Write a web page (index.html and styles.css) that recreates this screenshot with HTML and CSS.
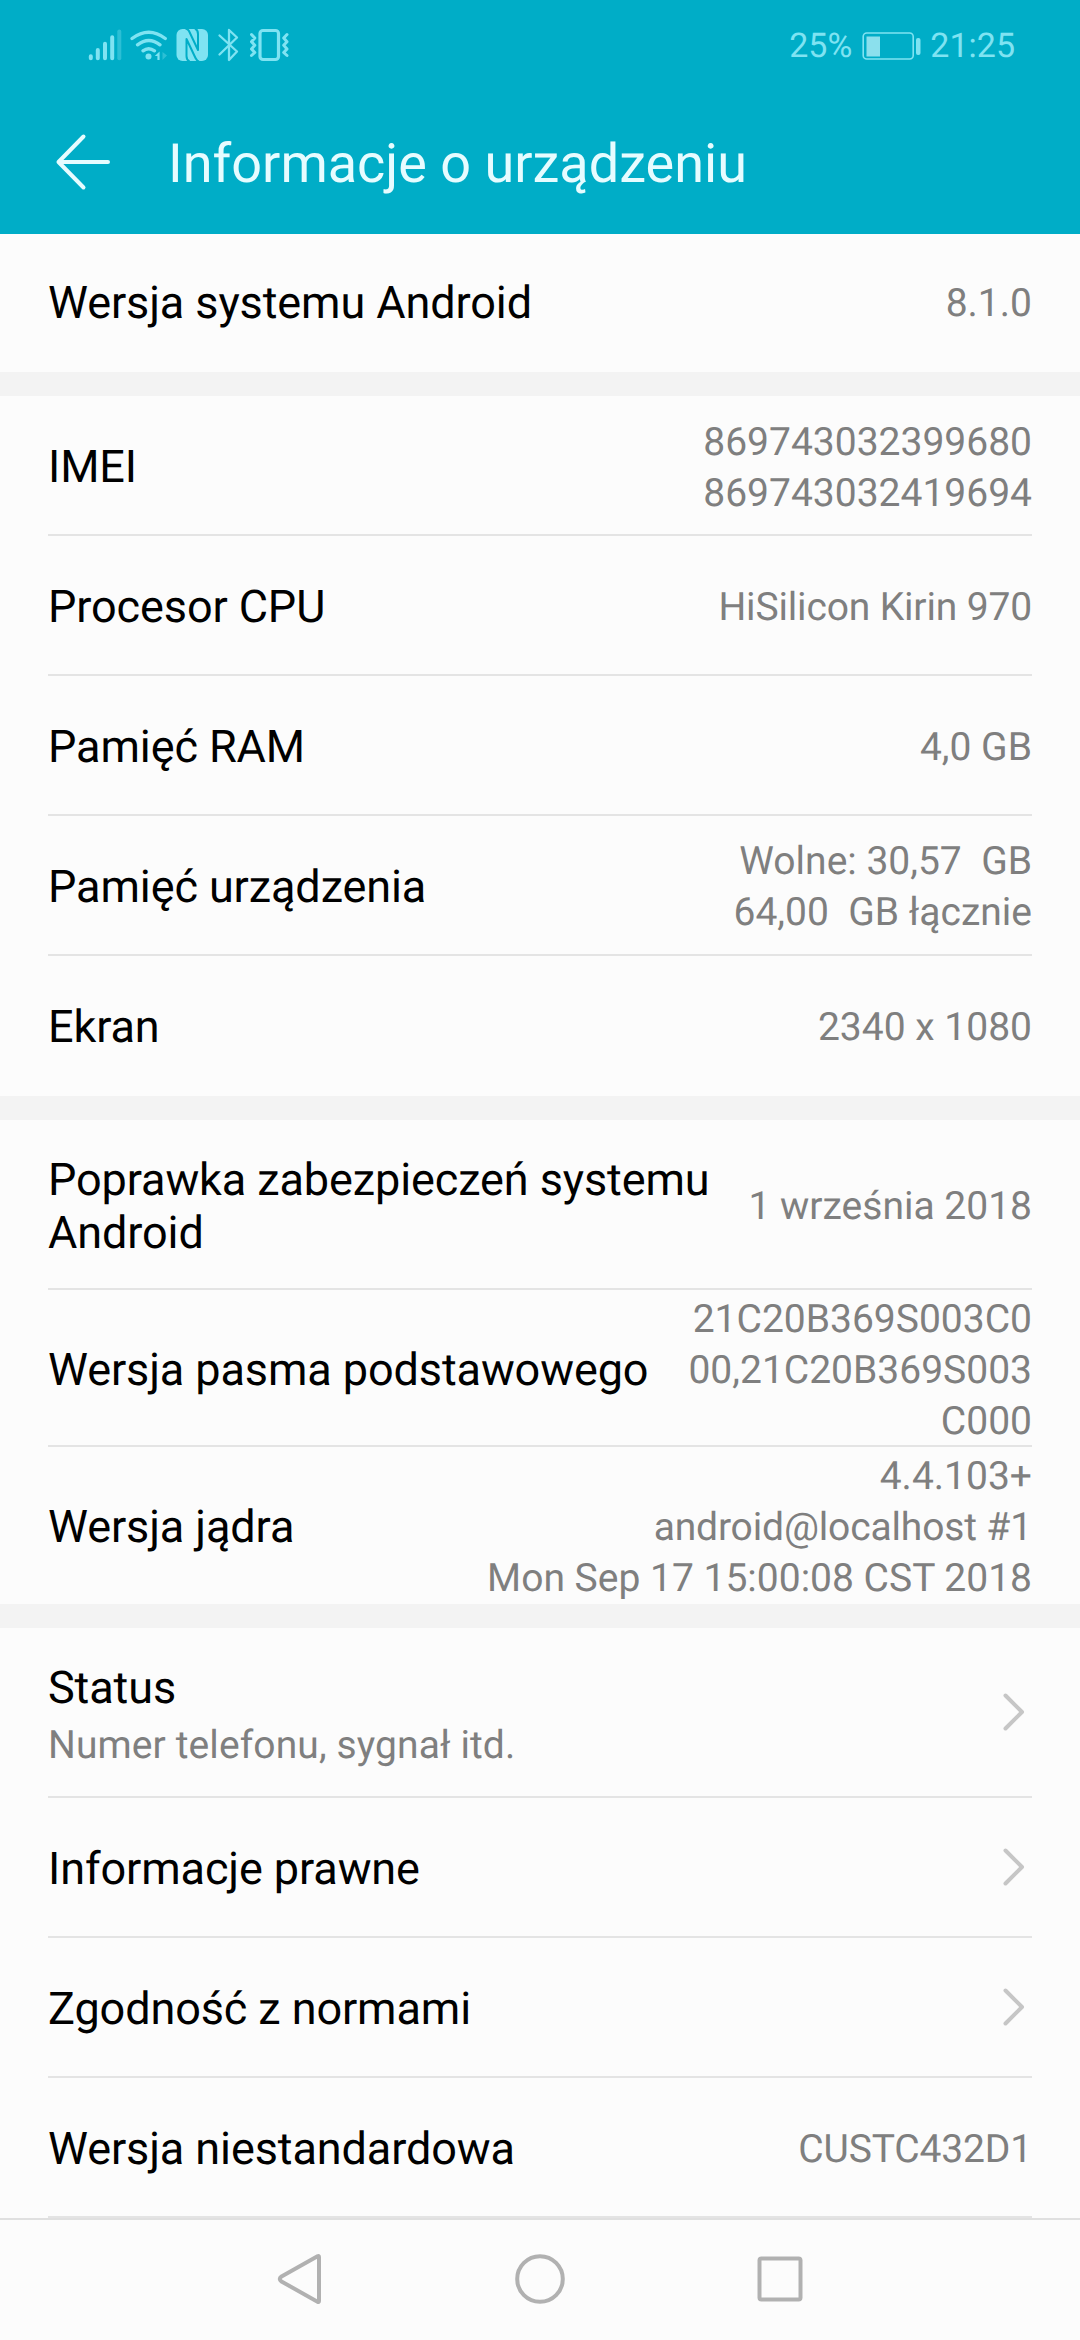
FILE: index.html
```html
<!DOCTYPE html>
<html lang="pl">
<head>
<meta charset="utf-8">
<title>Informacje o urządzeniu</title>
<link rel="stylesheet" href="styles.css">
</head>
<body>
<div class="screen">
  <header class="header">
    <div class="statusbar">
      <svg class="status-icons" width="240" height="70" viewBox="0 0 240 70" fill="none" stroke="#7fe3f2" stroke-linecap="round" stroke-linejoin="round">
        <g stroke-width="4">
          <path d="M20.800 46.200v2M27.800 40v8.200M35 33.700v14.500M42.200 27.300v20.900"/>
          <path d="M49.300 21.500v26.700" opacity=".35"/>
          <path d="M62 28.500q16.800-12.600 33.300 0M67.500 34.800q11.300-8.600 22.500 0M73 40.800q5.600-4.300 11.500 0" stroke-width="3.400"/>
        </g>
        <circle cx="78.500" cy="46.600" r="3" fill="#7fe3f2" stroke="none"/>
        <path d="M84.800 46l4.800-4.500v8.500h-2.200v-4z" fill="#7fe3f2" stroke="none"/>
        <path d="M92.500 42v8l4.500-4.500z" fill="#7fe3f2" stroke="none" opacity=".35"/>
        <rect x="106.500" y="19" width="31.500" height="32" rx="6" fill="#7fe3f2" stroke="none"/>
        <path d="M115.500 18.500Q118 19 119 21L128 40V24Q128 20 125 18.500M119.500 51.500Q116.500 50 116.500 46V29L125.500 48Q127 51 129 51.500" stroke="#00adc7" stroke-width="2" stroke-linecap="butt"/>
        <path d="M149.500 25.500l17.500 16-8 8.500V20l8 7.500-17.500 17" stroke-width="2.300"/>
        <rect x="190" y="20.500" width="18.500" height="29" rx="3" stroke-width="3.200"/>
        <path d="M181.500 24.500l3.300 3.500-3.300 3.700 3.300 3.600-3.300 3.600 3.300 3.600-3.300 3M217 24.500l-3.300 3.500 3.300 3.700-3.300 3.600 3.300 3.600-3.300 3.600 3.300 3" stroke-width="3"/>
      </svg>
      <div class="status-right">
        <span>25%</span>
        <svg class="battery" width="60" height="30" viewBox="0 0 60 30" fill="none">
          <rect x="1.200" y="2" width="50" height="26" rx="3.500" stroke="#7fe3f2" stroke-width="1.600"/>
          <rect x="4.500" y="5.500" width="13.500" height="20" fill="#8be0ed"/>
          <rect x="54" y="7" width="4.500" height="17" rx="2" fill="#7fe3f2"/>
        </svg>
        <span>21:25</span>
      </div>
    </div>
    <div class="titlebar">
      <svg class="back" width="60" height="60" viewBox="0 0 60 60" fill="none" stroke="#e6fcff" stroke-width="4" stroke-linecap="round" stroke-linejoin="round"><path d="M28.500 4.500L3.500 30l25 25.500M3.500 30H53"/></svg>
      <h1 class="title">Informacje o urządzeniu</h1>
    </div>
  </header>

  <main class="content">
    <section class="group">
      <div class="row row-first"><span class="label">Wersja systemu Android</span><span class="value">8.1.0</span></div>
    </section>
    <section class="group">
      <div class="row"><span class="label">IMEI</span><span class="value value-low">869743032399680<br>869743032419694</span></div>
      <div class="row"><span class="label">Procesor CPU</span><span class="value tight">HiSilicon Kirin 970</span></div>
      <div class="row"><span class="label">Pamięć RAM</span><span class="value">4,0 GB</span></div>
      <div class="row"><span class="label">Pamięć urządzenia</span><span class="value">Wolne: 30,57&nbsp; GB<br>64,00&nbsp; GB łącznie</span></div>
      <div class="row"><span class="label">Ekran</span><span class="value">2340 x 1080</span></div>
    </section>
    <section class="group">
      <div class="row row-tall"><span class="label label-low">Poprawka zabezpieczeń systemu<br>Android</span><span class="value">1 września 2018</span></div>
      <div class="row row-triple"><span class="label label-low">Wersja pasma podstawowego</span><span class="value value-low">21C20B369S003C0<br>00,21C20B369S003<br>C000</span></div>
      <div class="row row-triple"><span class="label label-low">Wersja jądra</span><span class="value value-low">4.4.103+<br><span class="tight">android@localhost #1</span><br>Mon Sep 17 15:00:08 CST 2018</span></div>
    </section>
    <section class="group group-open">
      <div class="row row-tall">
        <div class="stack"><span class="label">Status</span><span class="sub">Numer telefonu, sygnał itd.</span></div>
        <svg class="chevron" width="24" height="40" viewBox="0 0 24 40"><path d="M3.500 3.500L20 20 3.500 36.500"/></svg>
      </div>
      <div class="row"><span class="label">Informacje prawne</span><svg class="chevron" width="24" height="40" viewBox="0 0 24 40"><path d="M3.500 3.500L20 20 3.500 36.500"/></svg></div>
      <div class="row"><span class="label">Zgodność z normami</span><svg class="chevron" width="24" height="40" viewBox="0 0 24 40"><path d="M3.500 3.500L20 20 3.500 36.500"/></svg></div>
      <div class="row"><span class="label">Wersja niestandardowa</span><span class="value tight">CUSTC432D1</span></div>
    </section>
  </main>

  <nav class="navbar">
    <svg class="nav-icon" width="60" height="60" viewBox="0 0 60 60"><path d="M49 8V52Q49 53.500 47.500 52.700L11.500 32.500Q8 30 11.500 27.500L47.500 7.300Q49 6.500 49 8z"/></svg>
    <svg class="nav-icon" width="60" height="60" viewBox="0 0 60 60"><circle cx="30" cy="30" r="22.800"/></svg>
    <svg class="nav-icon" width="60" height="60" viewBox="0 0 60 60"><rect x="9.500" y="9.500" width="41" height="41" rx="2"/></svg>
  </nav>
</div>
</body>
</html>
```

FILE: styles.css
```css
* { box-sizing: border-box; }
body {
  margin: 0;
  background: #fcfcfc;
  font-family: Roboto, "Noto Sans", sans-serif;
  text-rendering: geometricPrecision;
}
.screen {
  width: 1080px;
  height: 2340px;
  display: flex;
  flex-direction: column;
  overflow: hidden;
}
.header {
  height: 234px;
  background: #00adc7;
  display: flex;
  flex-direction: column;
}
.statusbar {
  height: 90px;
  padding: 10px 65px 10px 70px;
  display: flex;
  justify-content: space-between;
}
.status-right {
  height: 70px;
  padding-top: 2px;
  display: flex;
  align-items: center;
  color: #7fe3f2;
  font-size: 34px;
  line-height: 40px;
}
.battery { margin: 0 8px 0 10px; }
.titlebar {
  height: 144px;
  padding: 0 55px;
  display: flex;
  align-items: center;
}
.back { margin-right: 53px; }
.title {
  margin: 6px 0 0;
  font-size: 54px;
  font-weight: 400;
  line-height: 64px;
  color: #e6fcff;
}
.content { height: 1984px; }
.group { border-bottom: 24px solid #f3f3f3; padding: 0 48px; }
.group-open { border-bottom: 0; }
.row {
  height: 140px;
  display: flex;
  align-items: center;
  justify-content: space-between;
  border-bottom: 2px solid #e4e4e4;
}
.row:last-child { border-bottom-color: transparent; }
.group-open .row:last-child { border-bottom-color: #e4e4e4; }
.row-first { height: 138px; padding-bottom: 2px; }
.row-tall { height: 170px; }
.row-triple { height: 157px; }
.label { padding-top: 2px; font-size: 45px; line-height: 53px; letter-spacing: -0.1px; color: #000; white-space: nowrap; }
.label-low { padding-top: 4px; }
.value { padding-top: 4px; font-size: 39px; line-height: 51px; color: #7f7f7f; text-align: right; white-space: nowrap; }
.value-low { padding-top: 6px; }
.tight { letter-spacing: -0.15px; }
.stack { padding-top: 6px; display: flex; flex-direction: column; }
.sub { margin-top: 6px; font-size: 39px; line-height: 51px; letter-spacing: 0.1px; color: #7f7f7f; }
.chevron {
  margin-right: 6px;
  fill: none;
  stroke: #c6c6c6;
  stroke-width: 4;
  stroke-linecap: round;
  stroke-linejoin: round;
}
.navbar {
  height: 122px;
  padding: 0 180px 2px;
  border-top: 2px solid #e0e0e0;
  display: grid;
  grid-template-columns: repeat(3, 240px);
  align-items: center;
  justify-items: center;
}
.nav-icon { fill: none; stroke: #b1b1b1; stroke-width: 4; stroke-linejoin: round; }
```
